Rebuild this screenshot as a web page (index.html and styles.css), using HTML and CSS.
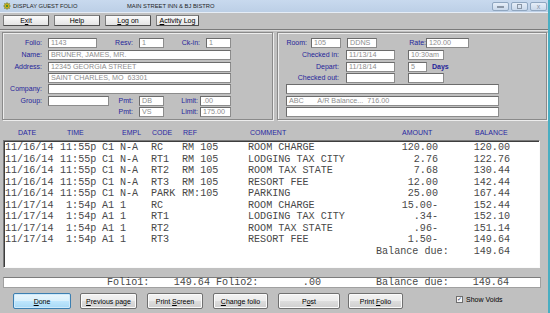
FILE: index.html
```html
<!DOCTYPE html>
<html>
<head>
  <meta charset="UTF-8">
  <title>Display Guest Folio</title>
  <link rel="stylesheet" href="styles.css">
</head>
<body>
<div class="window">

  <div class="titlebar">
    <svg class="app-icon" viewBox="0 0 8 8">
      <path d="M4 0.5 L4.8 2 L6.5 1.5 L6 3.2 L7.5 4 L6 4.8 L6.5 6.5 L4.8 6 L4 7.5 L3.2 6 L1.5 6.5 L2 4.8 L0.5 4 L2 3.2 L1.5 1.5 L3.2 2 Z" fill="#e0b818" stroke="#6b7a1e" stroke-width="0.6"/>
      <circle cx="4" cy="4" r="1.2" fill="#4d8a2a"/>
    </svg>
    <span class="title">DISPLAY GUEST FOLIO</span>
    <span class="app-name">MAIN STREET INN &amp; BJ BISTRO</span>
    <div class="controls">
      <span class="ctl"><i class="glyph-min"></i></span>
      <span class="ctl"><i class="glyph-max"></i></span>
      <span class="ctl"><i class="glyph-close">x</i></span>
    </div>
  </div>

  <div class="toolbar">
    <button class="tbtn">E<u>x</u>it</button>
    <button class="tbtn">Help</button>
    <button class="tbtn"><u>L</u>og on</button>
    <button class="tbtn tbtn-narrow"><u>A</u>ctivity Log</button>
  </div>

  <div class="panels">
    <div class="panel panel-left">
      <div class="row">
        <span class="lbl lbl-main">Folio:</span>
        <span class="fld fld-folio">1143</span>
        <span class="lbl lbl-resv">Resv:</span>
        <span class="fld fld-tiny">1</span>
        <span class="lbl lbl-resv">Ck-in:</span>
        <span class="fld fld-tiny">1</span>
      </div>
      <div class="row">
        <span class="lbl lbl-main">Name:</span>
        <span class="fld fld-wide">BRUNER, JAMES, MR.</span>
      </div>
      <div class="row">
        <span class="lbl lbl-main">Address:</span>
        <span class="fld fld-wide">12345 GEORGIA STREET</span>
      </div>
      <div class="row">
        <span class="lbl lbl-main"></span>
        <span class="fld fld-wide">SAINT CHARLES, MO&nbsp; 63301</span>
      </div>
      <div class="row">
        <span class="lbl lbl-main">Company:</span>
        <span class="fld fld-wide"></span>
      </div>
      <div class="row">
        <span class="lbl lbl-main">Group:</span>
        <span class="fld fld-group"></span>
        <span class="lbl lbl-pmt">Pmt:</span>
        <span class="fld fld-tiny">DB</span>
        <span class="lbl lbl-limit">Limit:</span>
        <span class="fld fld-limit">.00</span>
      </div>
      <div class="row row-pmt">
        <span class="lbl lbl-pmt">Pmt:</span>
        <span class="fld fld-tiny">VS</span>
        <span class="lbl lbl-limit">Limit:</span>
        <span class="fld fld-limit">175.00</span>
      </div>
    </div>

    <div class="panel panel-right">
      <div class="row">
        <span class="lbl lbl-room">Room:</span>
        <span class="fld fld-room">105</span>
        <span class="fld fld-ddns">DDNS</span>
        <span class="lbl lbl-rate">Rate:</span>
        <span class="fld fld-rate">120.00</span>
      </div>
      <div class="row">
        <span class="lbl lbl-check">Checked in:</span>
        <span class="fld fld-date">11/13/14</span>
        <span class="fld fld-time">10:30am</span>
      </div>
      <div class="row">
        <span class="lbl lbl-check">Depart:</span>
        <span class="fld fld-date">11/18/14</span>
        <span class="fld fld-days">5</span>
        <span class="lbl-days">Days</span>
      </div>
      <div class="row">
        <span class="lbl lbl-check">Checked out:</span>
        <span class="fld fld-date"></span>
        <span class="fld fld-time"></span>
      </div>
      <div class="row">
        <span class="fld fld-note"></span>
      </div>
      <div class="row">
        <span class="fld fld-note">ABC&nbsp;&nbsp;&nbsp;&nbsp;&nbsp;&nbsp; A/R Balance...&nbsp; 716.00</span>
      </div>
      <div class="row">
        <span class="fld fld-note"></span>
      </div>
    </div>
  </div>

  <div class="list-head">
    <span class="h-date">DATE</span>
    <span class="h-time">TIME</span>
    <span class="h-empl">EMPL</span>
    <span class="h-code">CODE</span>
    <span class="h-ref">REF</span>
    <span class="h-comment">COMMENT</span>
    <span class="h-amt">AMOUNT</span>
    <span>BALANCE</span>
  </div>

  <div class="list">
    <div class="line"><span class="c-date">11/16/14</span><span class="c-time">11:55p</span><span class="c-empl">C1</span><span class="c-emp2">N-A</span><span class="c-code">RC</span><span class="c-ref">RM 105</span><span class="c-comment">ROOM CHARGE</span><span class="c-amt">120.00</span><span class="c-bal">120.00</span></div>
    <div class="line"><span class="c-date">11/16/14</span><span class="c-time">11:55p</span><span class="c-empl">C1</span><span class="c-emp2">N-A</span><span class="c-code">RT1</span><span class="c-ref">RM 105</span><span class="c-comment">LODGING TAX CITY</span><span class="c-amt">2.76</span><span class="c-bal">122.76</span></div>
    <div class="line"><span class="c-date">11/16/14</span><span class="c-time">11:55p</span><span class="c-empl">C1</span><span class="c-emp2">N-A</span><span class="c-code">RT2</span><span class="c-ref">RM 105</span><span class="c-comment">ROOM TAX STATE</span><span class="c-amt">7.68</span><span class="c-bal">130.44</span></div>
    <div class="line"><span class="c-date">11/16/14</span><span class="c-time">11:55p</span><span class="c-empl">C1</span><span class="c-emp2">N-A</span><span class="c-code">RT3</span><span class="c-ref">RM 105</span><span class="c-comment">RESORT FEE</span><span class="c-amt">12.00</span><span class="c-bal">142.44</span></div>
    <div class="line"><span class="c-date">11/16/14</span><span class="c-time">11:55p</span><span class="c-empl">C1</span><span class="c-emp2">N-A</span><span class="c-code">PARK</span><span class="c-ref">RM:105</span><span class="c-comment">PARKING</span><span class="c-amt">25.00</span><span class="c-bal">167.44</span></div>
    <div class="line"><span class="c-date">11/17/14</span><span class="c-time"> 1:54p</span><span class="c-empl">A1</span><span class="c-emp2">1</span><span class="c-code">RC</span><span class="c-ref"></span><span class="c-comment">ROOM CHARGE</span><span class="c-amt">15.00-</span><span class="c-bal">152.44</span></div>
    <div class="line"><span class="c-date">11/17/14</span><span class="c-time"> 1:54p</span><span class="c-empl">A1</span><span class="c-emp2">1</span><span class="c-code">RT1</span><span class="c-ref"></span><span class="c-comment">LODGING TAX CITY</span><span class="c-amt">.34-</span><span class="c-bal">152.10</span></div>
    <div class="line"><span class="c-date">11/17/14</span><span class="c-time"> 1:54p</span><span class="c-empl">A1</span><span class="c-emp2">1</span><span class="c-code">RT2</span><span class="c-ref"></span><span class="c-comment">ROOM TAX STATE</span><span class="c-amt">.96-</span><span class="c-bal">151.14</span></div>
    <div class="line"><span class="c-date">11/17/14</span><span class="c-time"> 1:54p</span><span class="c-empl">A1</span><span class="c-emp2">1</span><span class="c-code">RT3</span><span class="c-ref"></span><span class="c-comment">RESORT FEE</span><span class="c-amt">1.50-</span><span class="c-bal">149.64</span></div>
    <div class="line"><span class="c-due">Balance due:</span><span class="c-bal">149.64</span></div>
  </div>

  <div class="totals">
    <span class="t-folio">Folio1:    149.64 Folio2:</span>
    <span class="t-f2">.00</span>
    <span class="t-due">Balance due:</span>
    <span class="t-bal">149.64</span>
  </div>

  <div class="actions">
    <button class="btn btn-default btn-done"><u>D</u>one</button>
    <button class="btn btn-prev"><u>P</u>revious page</button>
    <button class="btn btn-print"><span>Print <u>S</u>creen</span></button>
    <button class="btn btn-change"><u>C</u>hange folio</button>
    <button class="btn btn-post">P<u>o</u>st</button>
    <button class="btn btn-folio">Print <u>F</u>olio</button>
    <label class="check">
      <span class="check-box">&#10003;</span>
      Show Voids
    </label>
  </div>

</div>
</body>
</html>
```

FILE: styles.css
```css
body {
  margin: 0;
  padding: 0;
  background-color: #c0c0c0;
  font-family: "Liberation Sans", Arial, sans-serif;
  font-size: 7px;
  color: #000;
}
*, *:before, *:after {
  box-sizing: border-box;
}

.window {
  width: 550px;
  height: 313px;
  overflow: hidden;
  border-right: 2px solid #4aaec2;
}

/* title bar */
.titlebar {
  height: 13px;
  display: flex;
  align-items: center;
  background: linear-gradient(#c8d9ee, #bccfe6);
  border-bottom: 1px solid #e6edf6;
  font-size: 5.8px;
  color: #1e1e1e;
}
.app-icon {
  width: 8px;
  height: 8px;
  margin: 0 2px 0 3px;
}
.title {
  width: 114px;
}
.controls {
  margin-left: auto;
  display: flex;
  gap: 2px;
  margin-right: 1px;
}
.ctl {
  width: 17px;
  height: 9px;
  border: 1px solid #8fa6c0;
  border-radius: 2px;
  background: linear-gradient(#e6eef8, #cad9eb);
  display: flex;
  align-items: center;
  justify-content: center;
}
.glyph-min {
  width: 7px;
  height: 2px;
  background: #8a96a6;
  margin-top: 2px;
}
.glyph-max {
  width: 5px;
  height: 5px;
  border: 1px solid #8a96a6;
}
.glyph-close {
  font-style: normal;
  font-size: 7px;
  line-height: 7px;
  color: #8a96a6;
}

/* toolbar */
.toolbar {
  height: 17px;
  display: flex;
  gap: 5px;
  padding: 2px 0 0 3px;
  border-bottom: 1px solid #7a7a7a;
  box-shadow: 0 1px 0 #e2e2e2;
}
.tbtn {
  width: 46px;
  height: 11px;
  padding: 0;
  font-family: inherit;
  font-size: 7px;
  line-height: 9px;
  color: #000;
  background: linear-gradient(#fbfbfb, #e4e4e4);
  border: 1px solid #7c7c7c;
  border-right-color: #4e4e4e;
  border-bottom-color: #4e4e4e;
  border-radius: 1px;
}
.tbtn-narrow {
  width: 43px;
}

/* header panels */
.panels {
  display: flex;
  gap: 4px;
  margin-top: 2px;
  padding-left: 2px;
}
.panel {
  height: 88px;
  padding-top: 5px;
  border: 1px solid #8a8a8a;
  box-shadow: inset 1px 1px 0 #ededed, 1px 1px 0 #ededed;
  display: grid;
  grid-template-rows: 12px 12px 11px 11px 12px 11px 11px;
  align-content: start;
}
.panel-left {
  width: 271px;
}
.panel-right {
  width: 270px;
}
.row {
  display: flex;
  align-items: flex-start;
}
.row-pmt {
  padding-left: 106px;
}

.lbl {
  height: 10px;
  line-height: 10px;
  text-align: right;
  padding-right: 6px;
  color: #25259a;
  white-space: nowrap;
}
.lbl-main { width: 45px; }
.lbl-resv { width: 42px; }
.lbl-pmt { width: 30px; }
.lbl-limit { width: 36px; padding-right: 2px; }
.lbl-room { width: 33px; padding-right: 4px; }
.lbl-rate { width: 49px; padding-right: 0; }
.lbl-check { width: 68px; padding-right: 7px; }
.lbl-days {
  padding-left: 5px;
  line-height: 10px;
  font-weight: bold;
  color: #25259a;
}

.fld {
  height: 10px;
  padding-left: 2px;
  background: #fff;
  border: 1px solid #8c8c8c;
  border-top-color: #6c6c6c;
  border-left-color: #6c6c6c;
  font-size: 7.2px;
  line-height: 8px;
  color: #8e8e8e;
  white-space: nowrap;
  overflow: hidden;
}
.fld-folio { width: 49px; }
.fld-tiny { width: 25px; }
.fld-wide { width: 183px; }
.fld-group { width: 61px; }
.fld-limit { width: 31px; }
.fld-room { width: 30px; }
.fld-ddns { width: 30px; margin-left: 6px; }
.fld-rate { width: 43px; }
.fld-date { width: 49px; }
.fld-time { width: 36px; margin-left: 13px; }
.fld-days { width: 19px; margin-left: 13px; }
.fld-note { width: 213px; margin-left: 8px; }

/* transaction list */
.list-head {
  display: flex;
  margin-top: 8px;
  padding-left: 18px;
  height: 10px;
  line-height: 10px;
  color: #2828a2;
}
.h-date { width: 49px; }
.h-time { width: 55px; }
.h-empl { width: 30px; }
.h-code { width: 31px; }
.h-ref { width: 67px; }
.h-comment { width: 152px; }
.h-amt { width: 73px; }

.list {
  width: 537px;
  height: 128px;
  margin: 2px 0 0 3px;
  padding: 1px 0 0 1px;
  background: #fff;
  border: 1px solid #7a7a7a;
  border-right-color: #fbfbfb;
  border-bottom-color: #fbfbfb;
  box-shadow: inset 1px 1px 0 #3e3e3e;
  font-family: "Liberation Mono", "Courier New", monospace;
  font-size: 10.1px;
  line-height: 11.5px;
  color: #484848;
}
.line {
  display: flex;
  white-space: pre;
}
.c-date { width: 55px; }
.c-time { width: 42px; }
.c-empl { width: 18px; }
.c-emp2 { width: 31px; }
.c-code { width: 31px; }
.c-ref { width: 66px; }
.c-comment { width: 130px; }
.c-amt { width: 60px; text-align: right; }
.c-bal { width: 72px; text-align: right; }
.c-due { margin-left: 371px; width: 62px; }

.totals {
  display: flex;
  align-items: center;
  width: 538px;
  height: 11px;
  margin: 9px 0 0 3px;
  background: #fff;
  border: 1px solid #a0a0a0;
  border-top-color: #7c7c7c;
  font-family: "Liberation Mono", "Courier New", monospace;
  font-size: 10.1px;
  line-height: 9px;
  color: #484848;
  white-space: pre;
}
.t-folio { margin-left: 103px; width: 152px; }
.t-f2 { width: 62px; text-align: right; }
.t-due { margin-left: 55px; width: 73px; }
.t-bal { width: 60px; text-align: right; }

/* bottom buttons */
.actions {
  display: flex;
  align-items: center;
  height: 16px;
  margin-top: 5px;
  padding-left: 13px;
}
.btn {
  height: 16px;
  padding: 0;
  margin-right: 10px;
  font-family: inherit;
  font-size: 7px;
  color: #000;
  background: linear-gradient(#f3f3f3 0%, #ebebeb 48%, #dddddd 52%, #cfcfcf 100%);
  border: 1px solid #707070;
  border-radius: 2px;
  box-shadow: inset 0 0 0 1px #fbfbfb;
}
.btn-default {
  border-color: #3c7fb1;
  background: linear-gradient(#eaf6fd 0%, #d9f0fc 48%, #bee6fd 52%, #a7d9f5 100%);
  box-shadow: inset 0 0 0 1px #cfeafb;
}
.btn-done { width: 58px; margin-right: 9px; }
.btn-prev { width: 57px; }
.btn-print { width: 56px; }
.btn-change { width: 55px; }
.btn-post { width: 62px; margin-right: 8px; }
.btn-folio { width: 55px; margin-right: 53px; }

.check {
  display: flex;
  align-items: center;
  gap: 3px;
  margin-top: -4px;
  font-size: 7px;
}
.check-box {
  width: 7px;
  height: 7px;
  border: 1px solid #6f6f6f;
  background: #f4f4f4;
  font-size: 6px;
  line-height: 5px;
  text-align: center;
  color: #1f3a70;
}
```
